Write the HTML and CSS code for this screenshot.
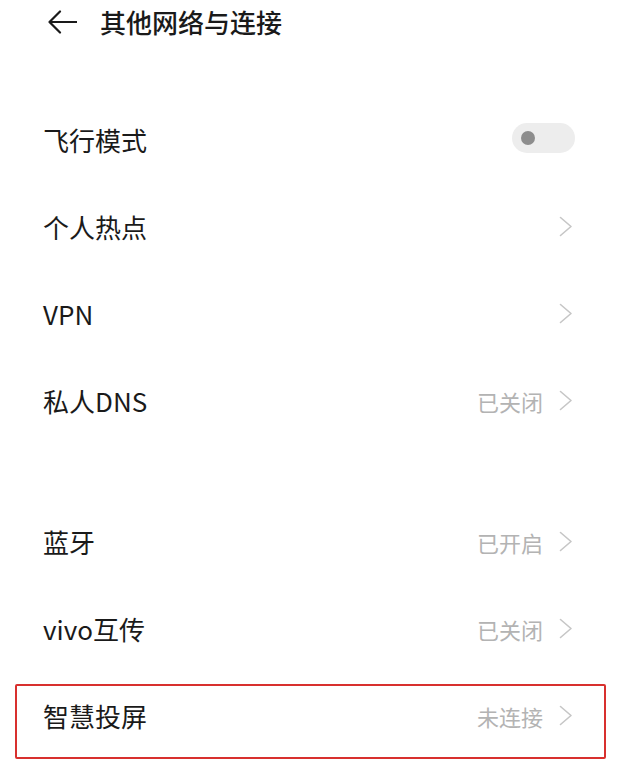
FILE: index.html
```html
<!DOCTYPE html>
<html lang="zh-CN">
  <head>
    <meta charset="UTF-8" />
    <meta name="viewport" content="width=device-width, initial-scale=1.0" />
    <title>其他网络与连接</title>
    <link rel="stylesheet" href="styles.css">
  </head>
  <body>
    <div class="page">
      <div class="header">
        <svg class="back" width="29" height="24" viewBox="0 0 29 24">
          <path d="M12 1.5 L1.5 12 L12 22.5 M1.5 12 H28.5" fill="none" stroke="#1a1a1a" stroke-width="2.2" stroke-linecap="round" stroke-linejoin="round" />
        </svg>
        <div class="title">其他网络与连接</div>
      </div>

      <!-- first group -->
      <div class="group group-top">
        <div class="row">
          <span class="label">飞行模式</span>
          <div class="switch"><div class="knob"></div></div>
        </div>
        <div class="row">
          <span class="label">个人热点</span>
          <div class="right">
            <svg class="chev" width="14" height="21" viewBox="0 0 14 21"><path d="M1.5 1.5 L12 10.5 L1.5 19.5" /></svg>
          </div>
        </div>
        <div class="row">
          <span class="label">VPN</span>
          <div class="right">
            <svg class="chev" width="14" height="21" viewBox="0 0 14 21"><path d="M1.5 1.5 L12 10.5 L1.5 19.5" /></svg>
          </div>
        </div>
        <div class="row">
          <span class="label">私人DNS</span>
          <div class="right">
            <span class="value">已关闭</span>
            <svg class="chev" width="14" height="21" viewBox="0 0 14 21"><path d="M1.5 1.5 L12 10.5 L1.5 19.5" /></svg>
          </div>
        </div>
      </div>

      <!-- second group -->
      <div class="group group-bottom">
        <div class="row">
          <span class="label">蓝牙</span>
          <div class="right">
            <span class="value">已开启</span>
            <svg class="chev" width="14" height="21" viewBox="0 0 14 21"><path d="M1.5 1.5 L12 10.5 L1.5 19.5" /></svg>
          </div>
        </div>
        <div class="row">
          <span class="label">vivo互传</span>
          <div class="right">
            <span class="value">已关闭</span>
            <svg class="chev" width="14" height="21" viewBox="0 0 14 21"><path d="M1.5 1.5 L12 10.5 L1.5 19.5" /></svg>
          </div>
        </div>
        <div class="row marked">
          <span class="label">智慧投屏</span>
          <div class="right">
            <span class="value">未连接</span>
            <svg class="chev" width="14" height="21" viewBox="0 0 14 21"><path d="M1.5 1.5 L12 10.5 L1.5 19.5" /></svg>
          </div>
        </div>
      </div>
    </div>
  </body>
</html>
```

FILE: styles.css
```css
body {
  margin: 0;
  padding: 0;
  background-color: #ffffff;
  font-family: "Noto Sans CJK SC", "Noto Sans", sans-serif;
  color: #1a1a1a;
}

.page {
  width: 623px;
  padding-bottom: 17px;
}

.header {
  height: 44px;
  display: flex;
  align-items: center;
  padding-left: 48px;
  gap: 23px;
}

.back {
  display: block;
}

.title {
  font-size: 26px;
  font-weight: 500;
  line-height: 1;
}

.group {
  display: flex;
  flex-direction: column;
}

.group-top {
  margin-top: 52px;
}

.group-bottom {
  margin-top: 54px;
}

.row {
  position: relative;
  height: 87px;
  display: flex;
  align-items: center;
  justify-content: space-between;
  padding: 0 48px 0 43px;
}

.label {
  font-size: 26px;
  line-height: 1;
}

.right {
  display: flex;
  align-items: center;
  gap: 16px;
  padding-right: 2px;
}

.value {
  font-size: 22px;
  color: #b3b3b3;
  line-height: 1;
}

.chev {
  display: block;
  fill: none;
  stroke: #c6c6c6;
  stroke-width: 1.6;
  stroke-linecap: round;
  stroke-linejoin: round;
}

.switch {
  width: 63px;
  height: 30px;
  border-radius: 15px;
  background-color: #ededed;
  display: flex;
  align-items: center;
  padding-left: 9px;
  box-sizing: border-box;
  margin-top: -3px;
}

.knob {
  width: 14px;
  height: 14px;
  border-radius: 50%;
  background-color: #8d8d8d;
}

/* red highlight around the last row */
.marked::after {
  content: "";
  position: absolute;
  top: 12px;
  bottom: 0;
  left: 15px;
  right: 17px;
  border: 2px solid #d8302e;
  border-radius: 2px;
}
```
